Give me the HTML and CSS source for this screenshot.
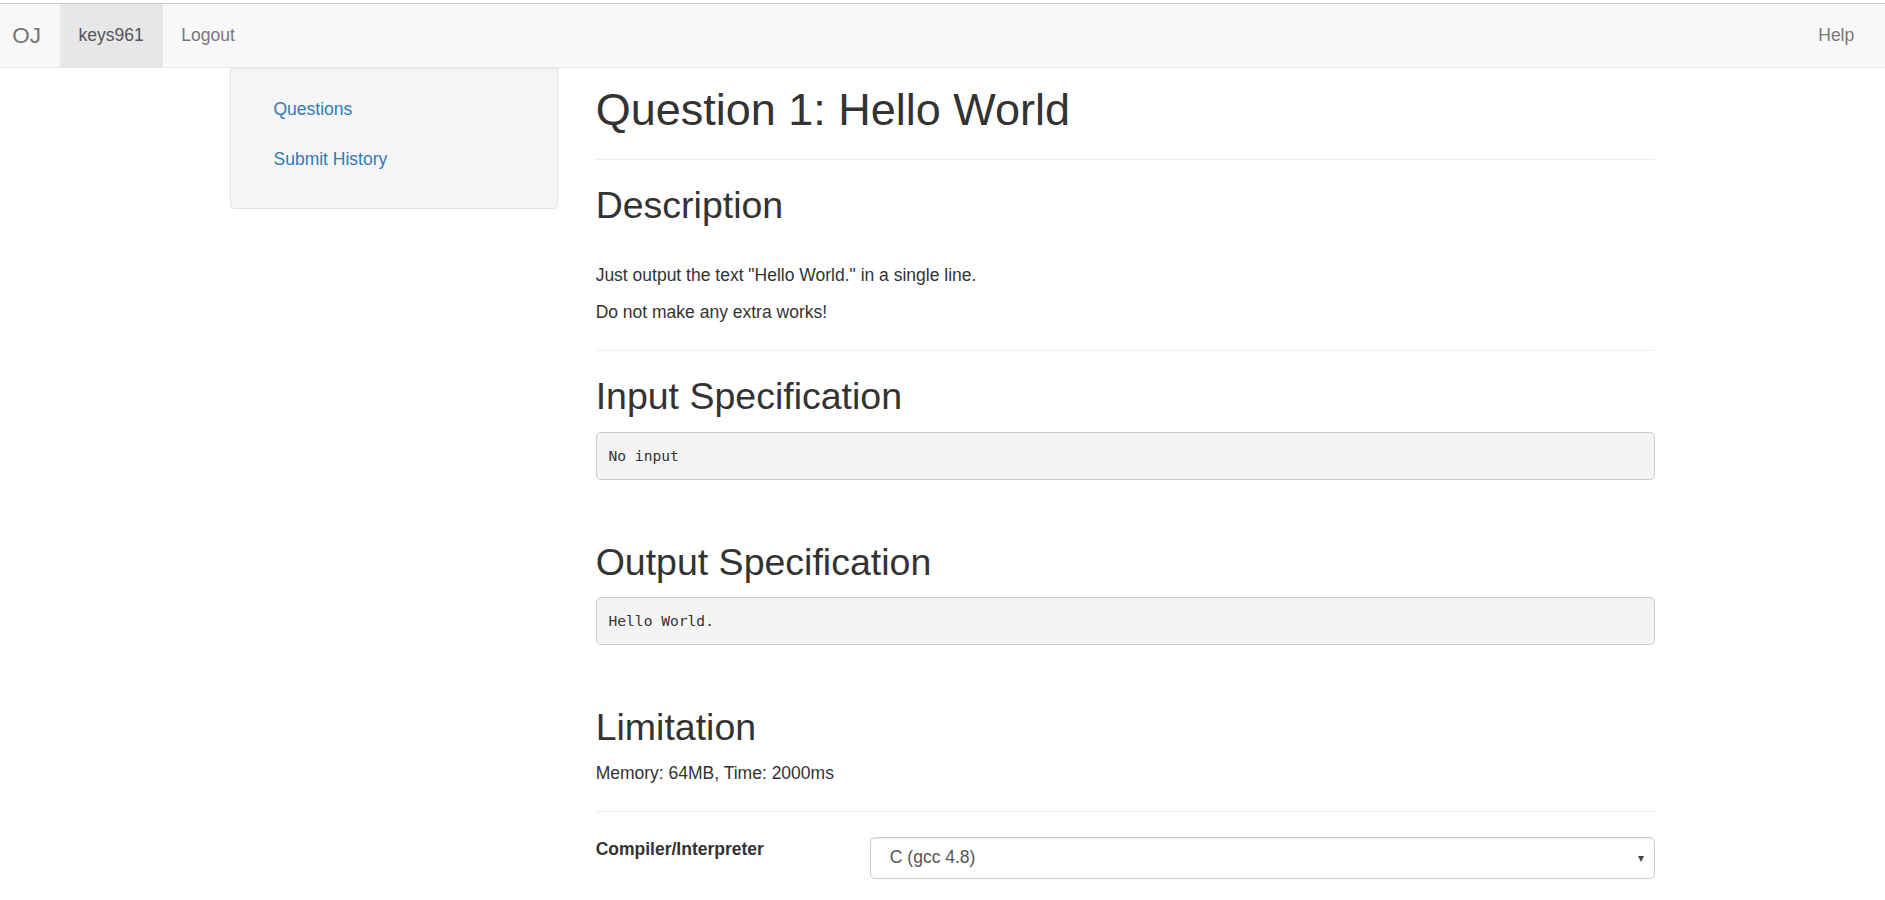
FILE: index.html
```html
<!DOCTYPE html>
<html lang="en">
<head>
<meta charset="utf-8">
<title>Question 1: Hello World</title>
<link rel="stylesheet" href="styles.css">
</head>
<body>
<nav class="navbar">
  <div class="navbar-left">
    <a class="brand" href="#">OJ</a>
    <ul class="nav">
      <li class="active"><a href="#">keys961</a></li>
      <li><a href="#">Logout</a></li>
    </ul>
  </div>
  <ul class="nav nav-right">
    <li><a href="#">Help</a></li>
  </ul>
</nav>

<div class="container">
  <div class="row">
    <aside class="col-side">
      <div class="well">
        <ul class="pills">
          <li><a href="#">Questions</a></li>
          <li><a href="#">Submit History</a></li>
        </ul>
      </div>
    </aside>
    <main class="col-main">
      <h1 class="title">Question 1: Hello World</h1>
      <hr class="rule">
      <h2 class="section-title">Description</h2>
      <div class="desc">
        <p>Just output the text "Hello World." in a single line.</p>
        <p>Do not make any extra works!</p>
      </div>
      <hr class="rule">
      <section class="spec">
        <h2 class="section-title">Input Specification</h2>
        <pre class="code">No input</pre>
      </section>
      <section class="spec">
        <h2 class="section-title">Output Specification</h2>
        <pre class="code">Hello World.</pre>
      </section>
      <section class="limit">
        <h2 class="section-title tight">Limitation</h2>
        <p class="limit-text">Memory: 64MB, Time: 2000ms</p>
      </section>
      <hr class="rule">
      <div class="form-row">
        <label class="form-label" for="lang">Compiler/Interpreter</label>
        <div class="form-field">
          <div class="select-wrap">
            <select id="lang" class="form-select">
              <option>C (gcc 4.8)</option>
              <option>C++ (g++ 4.8)</option>
              <option>Java 8</option>
            </select>
          </div>
        </div>
      </div>
    </main>
  </div>
</div>
</body>
</html>
```

FILE: styles.css
```css
* {
  box-sizing: border-box;
}

html, body {
  margin: 0;
  padding: 0;
  background: #fff;
}

body {
  font-family: "Liberation Sans", Arial, Helvetica, sans-serif;
  font-size: 17.5px;
  line-height: 25px;
  color: #333;
}

a {
  text-decoration: none;
}

/* ---------- Navbar ---------- */
.navbar {
  margin-top: 3px;
  display: flex;
  justify-content: space-between;
  align-items: stretch;
  background: #f8f8f8;
  border-top: 1px solid #c8c8c8;
  border-bottom: 1px solid #e7e7e7;
  height: 64.5px;
}

.navbar-left {
  display: flex;
  align-items: stretch;
}

.brand {
  display: block;
  padding: 18.75px 18.75px 18.75px 12.3px;
  font-size: 22.5px;
  line-height: 25px;
  color: #777;
}

.nav {
  list-style: none;
  margin: 0;
  padding: 0;
  display: flex;
}

.nav li a {
  display: block;
  padding: 18.75px;
  line-height: 25px;
  color: #777;
}

.nav li.active a {
  background: #e7e7e7;
  color: #555;
}

.nav-right {
  margin-right: 12px;
}

/* ---------- Layout ---------- */
.container {
  width: 1462.5px;
  margin: 0 auto;
  padding: 0 18.75px;
}

.row {
  display: flex;
  margin: 0 -18.75px;
}

.col-side {
  width: 25%;
  padding: 0 18.75px;
}

.col-main {
  width: 75%;
  padding: 0 18.75px;
}

/* ---------- Sidebar ---------- */
.well {
  background: #f5f5f5;
  border: 1px solid #e3e3e3;
  border-top: none;
  border-radius: 0 0 5px 5px;
  box-shadow: inset 0 1px 1px rgba(0, 0, 0, 0.05);
  padding: 17px 23.75px 23.75px;
}

.pills {
  list-style: none;
  margin: 0;
  padding: 0;
}

.pills li a {
  display: block;
  padding: 12.5px 18.75px;
  line-height: 25px;
  color: #337ab7;
}

/* ---------- Content ---------- */
.title {
  font-size: 45px;
  line-height: 49.5px;
  font-weight: normal;
  margin: 17px 0 12.5px;
  color: #333;
}

.rule {
  border: 0;
  border-top: 1px solid #eee;
  margin: 25px 0;
  height: 0;
}

.section-title {
  font-size: 37.5px;
  line-height: 41.25px;
  font-weight: normal;
  margin: 25px 0 12.5px;
  color: #333;
}

.desc {
  padding-top: 24px;
}

.desc p,
.limit-text {
  margin: 0 0 12.5px;
}

.spec {
  margin-bottom: 62px;
}

.code {
  margin: 14px 0 0;
  padding: 11.25px 11.875px;
  background: #f4f4f4;
  border: 1px solid #ccc;
  border-radius: 5px;
  font-family: "DejaVu Sans Mono", "Liberation Mono", monospace;
  font-size: 14.6px;
  line-height: 23.5px;
  color: #333;
  white-space: pre;
}

.limit .section-title {
  margin-bottom: 12.5px;
}

/* ---------- Form ---------- */
.form-row {
  display: flex;
  margin: 0 -18.75px;
}

.form-label {
  width: 25%;
  padding: 0 18.75px;
  font-weight: bold;
  line-height: 25px;
}

.form-field {
  width: 75%;
  padding: 0 18.75px;
}

.select-wrap {
  position: relative;
}

.select-wrap::after {
  content: "";
  position: absolute;
  right: 11px;
  top: 19px;
  border-left: 3px solid transparent;
  border-right: 3px solid transparent;
  border-top: 6px solid #444;
  pointer-events: none;
}

.form-select {
  display: block;
  width: 100%;
  height: 42.5px;
  padding: 7.5px 15px 7.5px 19px;
  font-family: "Liberation Sans", Arial, sans-serif;
  font-size: 17.5px;
  line-height: 25px;
  color: #555;
  background: #fff;
  border: 1px solid #ccc;
  border-radius: 5px;
  box-shadow: inset 0 1px 1px rgba(0, 0, 0, 0.075);
  -webkit-appearance: none;
  appearance: none;
}
```
